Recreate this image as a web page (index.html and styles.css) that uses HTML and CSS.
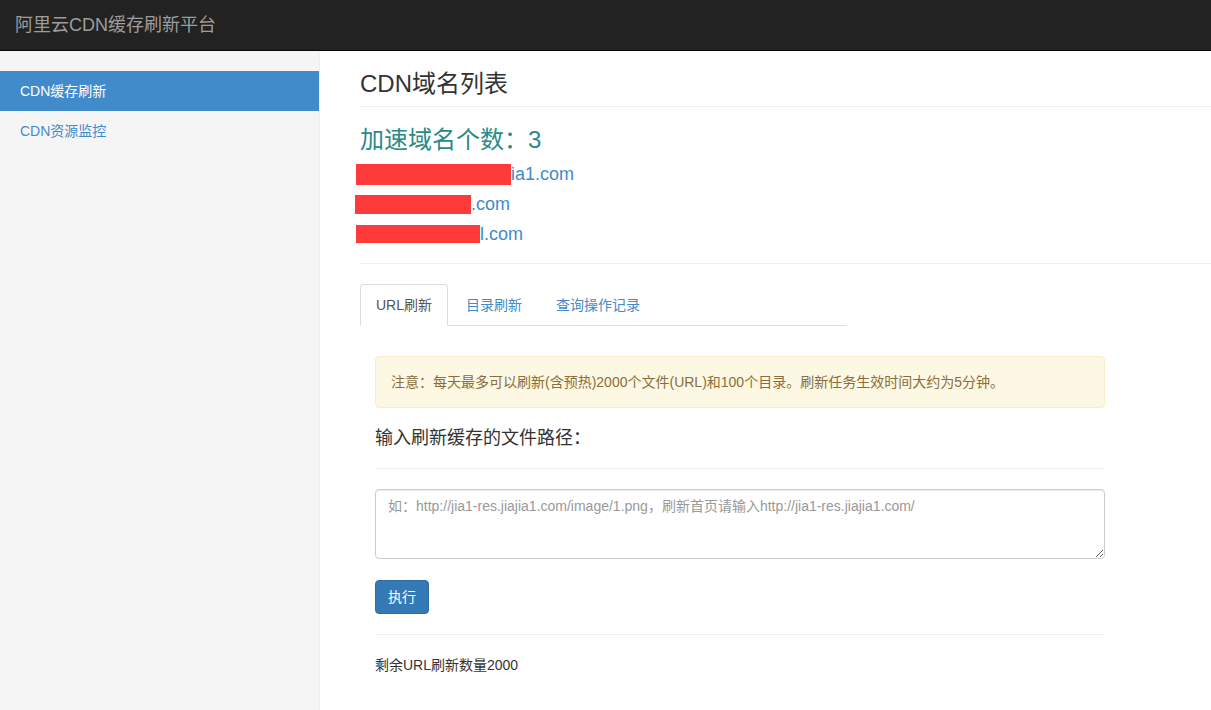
FILE: index.html
```html
<!DOCTYPE html>
<html lang="zh-CN">
<head>
<meta charset="utf-8">
<title>阿里云CDN缓存刷新平台</title>
<link rel="stylesheet" href="styles.css">
</head>
<body>
<header class="navbar">
  <a class="brand" href="#">阿里云CDN缓存刷新平台</a>
</header>
<div class="layout">
  <aside class="sidebar">
    <ul class="side-nav">
      <li class="active"><a href="#">CDN缓存刷新</a></li>
      <li><a href="#">CDN资源监控</a></li>
    </ul>
  </aside>
  <main class="main">
    <h1 class="page-header">CDN域名列表</h1>
    <h2 class="count">加速域名个数：3</h2>
    <div class="domains">
      <div class="domain"><span class="redact r1"></span><a href="#">ia1.com</a></div>
      <div class="domain"><span class="redact r2"></span><a href="#">.com</a></div>
      <div class="domain"><span class="redact r3"></span><a href="#">l.com</a></div>
    </div>
    <hr class="rule">
    <ul class="tabs">
      <li class="active"><a href="#">URL刷新</a></li>
      <li><a href="#">目录刷新</a></li>
      <li><a href="#">查询操作记录</a></li>
    </ul>
    <section class="pane">
      <div class="alert">注意：每天最多可以刷新(含预热)2000个文件(URL)和100个目录。刷新任务生效时间大约为5分钟。</div>
      <h4 class="label">输入刷新缓存的文件路径：</h4>
      <hr class="rule">
      <textarea class="input" placeholder="如：http://jia1-res.jiajia1.com/image/1.png，刷新首页请输入http://jia1-res.jiajia1.com/"></textarea>
      <button class="btn" type="button">执行</button>
      <hr class="rule">
      <p class="remain">剩余URL刷新数量2000</p>
    </section>
  </main>
</div>
</body>
</html>
```

FILE: styles.css
```css
* { box-sizing: border-box; }
html, body { margin: 0; padding: 0; }
body {
  font-family: "Liberation Sans", "Noto Sans CJK SC", sans-serif;
  font-size: 14px;
  line-height: 20px;
  color: #333;
  background: #fff;
  overflow: hidden;
}
a { text-decoration: none; color: #428bca; }

.navbar {
  height: 51px;
  background: #222;
  border-bottom: 1px solid #080808;
  padding: 0 15px;
  display: flex;
  align-items: center;
}
.brand {
  color: #9d9d9d;
  font-size: 18px;
  line-height: 20px;
}

.layout {
  display: flex;
  min-height: 659px;
}
.sidebar {
  width: 320px;
  flex: none;
  background: #f5f5f5;
  border-right: 1px solid #eee;
  padding-top: 20px;
}
.side-nav { list-style: none; margin: 0; padding: 0; }
.side-nav a {
  display: block;
  padding: 10px 20px;
  color: #428bca;
  font-size: 14px;
  line-height: 20px;
}
.side-nav .active a { background: #428bca; color: #fff; }

.main {
  flex: 1;
  padding: 20px 0 20px 40px;
  min-width: 0;
}
.page-header {
  margin: 0;
  font-size: 24px;
  font-weight: 400;
  line-height: 26px;
  padding-bottom: 9px;
  border-bottom: 1px solid #eee;
  color: #333;
}
.count {
  margin: 20px 0 6px;
  font-size: 24px;
  font-weight: 400;
  line-height: 26px;
  color: #2a8a88;
}
.domains { margin-bottom: 14px; }
.domain {
  font-size: 18px;
  line-height: 30px;
  display: flex;
  align-items: center;
}
.redact {
  display: inline-block;
  background: #fe3a3a;
  margin-left: -4px;
}
.r1 { width: 155px; height: 21px; }
.r2 { width: 116px; height: 19px; margin-left: -5px; }
.r3 { width: 124px; height: 18px; }

.rule {
  border: 0;
  border-top: 1px solid #eee;
  margin: 0;
}
.domains + .rule { margin-bottom: 20px; }

.tabs {
  list-style: none;
  margin: 0;
  padding: 0;
  width: 487px;
  display: flex;
  border-bottom: 1px solid #ddd;
}
.tabs li { margin-bottom: -1px; margin-right: 2px; }
.tabs a {
  display: block;
  padding: 10px 15px;
  line-height: 20px;
  border: 1px solid transparent;
  border-radius: 4px 4px 0 0;
  color: #428bca;
}
.tabs .active a {
  color: #555;
  background: #fff;
  border-color: #ddd #ddd transparent;
}

.pane {
  width: 760px;
  padding: 30px 15px 0;
}
.alert {
  padding: 15px;
  background: #fcf8e3;
  border: 1px solid #faebcc;
  border-radius: 4px;
  color: #8a6d3b;
  margin-bottom: 20px;
}
.label {
  margin: 0;
  font-size: 18px;
  font-weight: 400;
  line-height: 20px;
  color: #333;
}
.label + .rule { margin: 20px 0; }
.input {
  display: block;
  width: 100%;
  height: 70px;
  padding: 6px 12px;
  font-family: inherit;
  font-size: 14px;
  line-height: 20px;
  color: #555;
  border: 1px solid #ccc;
  border-radius: 4px;
  box-shadow: inset 0 1px 1px rgba(0,0,0,.075);
  resize: vertical;
}
.input::placeholder { color: #999; }
.btn {
  margin-top: 21px;
  display: block;
  padding: 6px 12px;
  font-family: inherit;
  font-size: 14px;
  line-height: 20px;
  color: #fff;
  background: #337ab7;
  border: 1px solid #2e6da4;
  border-radius: 4px;
}
.btn + .rule { margin: 20px 0; }
.remain { margin: 0; line-height: 20px; }
```
